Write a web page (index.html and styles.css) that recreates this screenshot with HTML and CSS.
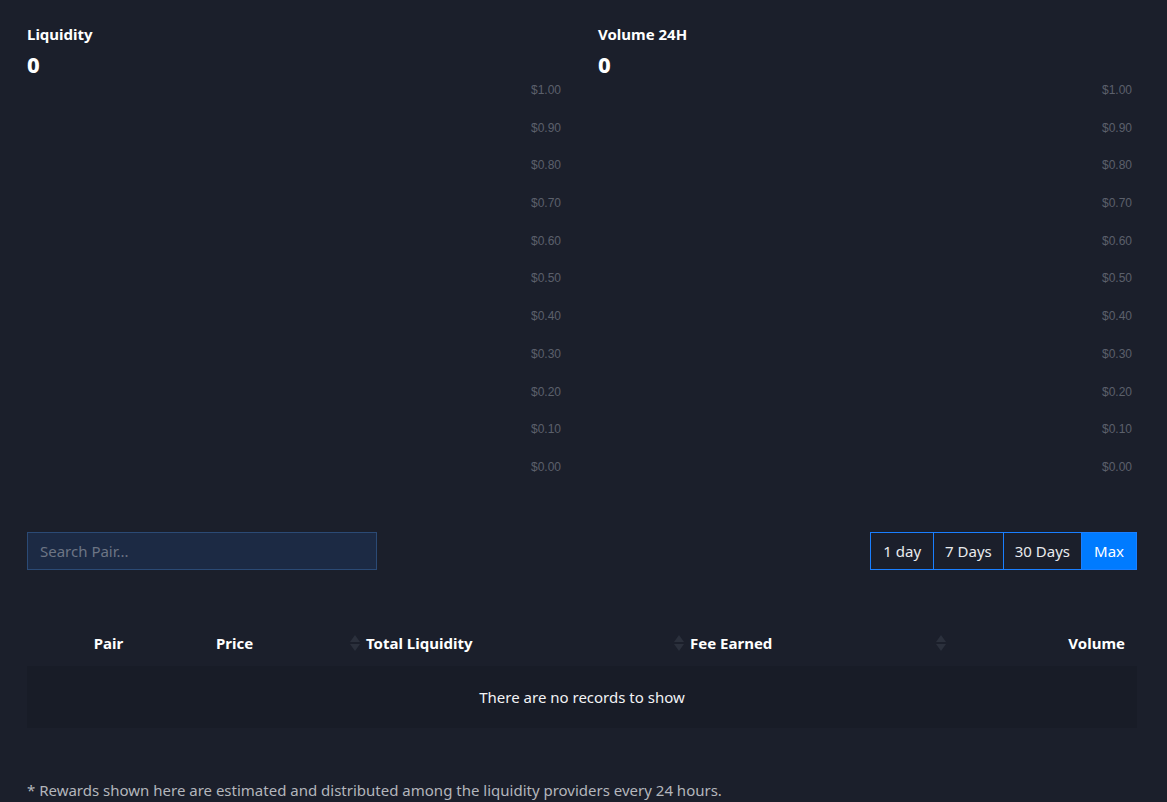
FILE: index.html
```html
<!DOCTYPE html>
<html lang="en">
<head>
    <meta charset="UTF-8">
    <title>Pool Stats</title>
    <link rel="stylesheet" href="styles.css">
</head>
<body>
    <div class="container">
        <div class="charts">
            <div class="chart">
                <div class="chart-title">Liquidity</div>
                <div class="chart-value">0</div>
                <div class="axis">
                    <span>$1.00</span><span>$0.90</span><span>$0.80</span><span>$0.70</span>
                    <span>$0.60</span><span>$0.50</span><span>$0.40</span><span>$0.30</span>
                    <span>$0.20</span><span>$0.10</span><span>$0.00</span>
                </div>
            </div>
            <div class="chart">
                <div class="chart-title">Volume 24H</div>
                <div class="chart-value">0</div>
                <div class="axis">
                    <span>$1.00</span><span>$0.90</span><span>$0.80</span><span>$0.70</span>
                    <span>$0.60</span><span>$0.50</span><span>$0.40</span><span>$0.30</span>
                    <span>$0.20</span><span>$0.10</span><span>$0.00</span>
                </div>
            </div>
        </div>

        <div class="toolbar">
            <input class="search" type="text" placeholder="Search Pair...">
            <div class="ranges">
                <a href="#">1 day</a>
                <a href="#">7 Days</a>
                <a href="#">30 Days</a>
                <a href="#" class="active">Max</a>
            </div>
        </div>

        <div class="table">
            <div class="thead">
                <div class="th th-pair">Pair</div>
                <div class="th th-price">Price</div>
                <div class="th"><span class="sort"></span>Total Liquidity</div>
                <div class="th"><span class="sort"></span>Fee Earned</div>
                <div class="th th-volume"><span class="sort"></span><span class="grow"></span>Volume</div>
            </div>
            <div class="empty">There are no records to show</div>
        </div>

        <p class="note">* Rewards shown here are estimated and distributed among the liquidity providers every 24 hours.</p>
    </div>
</body>
</html>
```

FILE: styles.css
```css
body {
    font-family: "Noto Sans", sans-serif;
    background-color: #1b1f2b;
    color: #fff;
    margin: 0;
    padding: 0;
}

.container {
    padding: 24px 30px 0 27px;
}

.charts {
    display: grid;
    grid-template-columns: 1fr 1fr;
    gap: 32px;
}

.chart-title {
    font-size: 15px;
    font-weight: 700;
    line-height: 20px;
}

.chart-value {
    font-size: 22px;
    font-weight: 800;
    line-height: 24px;
    margin-top: 8px;
    letter-spacing: 1px;
}

.axis {
    display: flex;
    flex-direction: column;
    align-items: flex-end;
    gap: 23.7px;
    padding-right: 5px;
    margin-top: 7px;
    height: 392px;
}

.axis span {
    font-family: "Liberation Sans", Arial, sans-serif;
    font-size: 12px;
    line-height: 14px;
    color: #5b606b;
}

.toolbar {
    display: flex;
    justify-content: space-between;
    align-items: center;
    margin-top: 57px;
}

.search {
    width: 350px;
    height: 38px;
    box-sizing: border-box;
    background-color: #1c2a44;
    border: 1px solid #2b4a75;
    color: #fff;
    font-family: "Noto Sans", sans-serif;
    font-size: 15px;
    padding: 0 12px;
    outline: none;
}

.search::placeholder {
    color: #6d7584;
}

.ranges {
    display: flex;
    border: 1px solid #1a7fff;
}

.ranges a {
    color: #e9ebee;
    text-decoration: none;
    font-size: 15px;
    line-height: 36px;
    padding: 0 11px;
    border-left: 1px solid #1a7fff;
}

.ranges a:first-child {
    border-left: none;
    padding: 0 12px;
}

.ranges a.active {
    background-color: #007bff;
    color: #fff;
    padding: 0 12px;
}

.table {
    margin-top: 52px;
}

.thead {
    display: grid;
    grid-template-columns: 163px 155px 324px 262px 1fr;
    height: 44px;
    padding-bottom: 3px;
    box-sizing: border-box;
    align-items: center;
}

.th {
    display: flex;
    align-items: center;
    font-size: 15px;
    font-weight: 700;
    padding-left: 5px;
}

.th-pair {
    justify-content: center;
    padding-left: 0;
}

.th-price {
    padding-left: 26px;
}

.th-volume {
    padding-right: 12px;
}

.grow {
    flex: 1;
}

.sort {
    display: inline-flex;
    flex-direction: column;
    gap: 2px;
    margin-right: 6px;
}

.sort::before,
.sort::after {
    content: "";
    border-left: 5px solid transparent;
    border-right: 5px solid transparent;
}

.sort::before {
    border-bottom: 7px solid #2b303c;
}

.sort::after {
    border-top: 7px solid #2b303c;
}

.empty {
    background-color: #181c27;
    height: 62px;
    display: flex;
    align-items: center;
    justify-content: center;
    font-size: 15px;
    color: #f2f3f5;
}

.note {
    margin: 52px 0 0;
    font-size: 15px;
    color: #b3b6bc;
}
```
